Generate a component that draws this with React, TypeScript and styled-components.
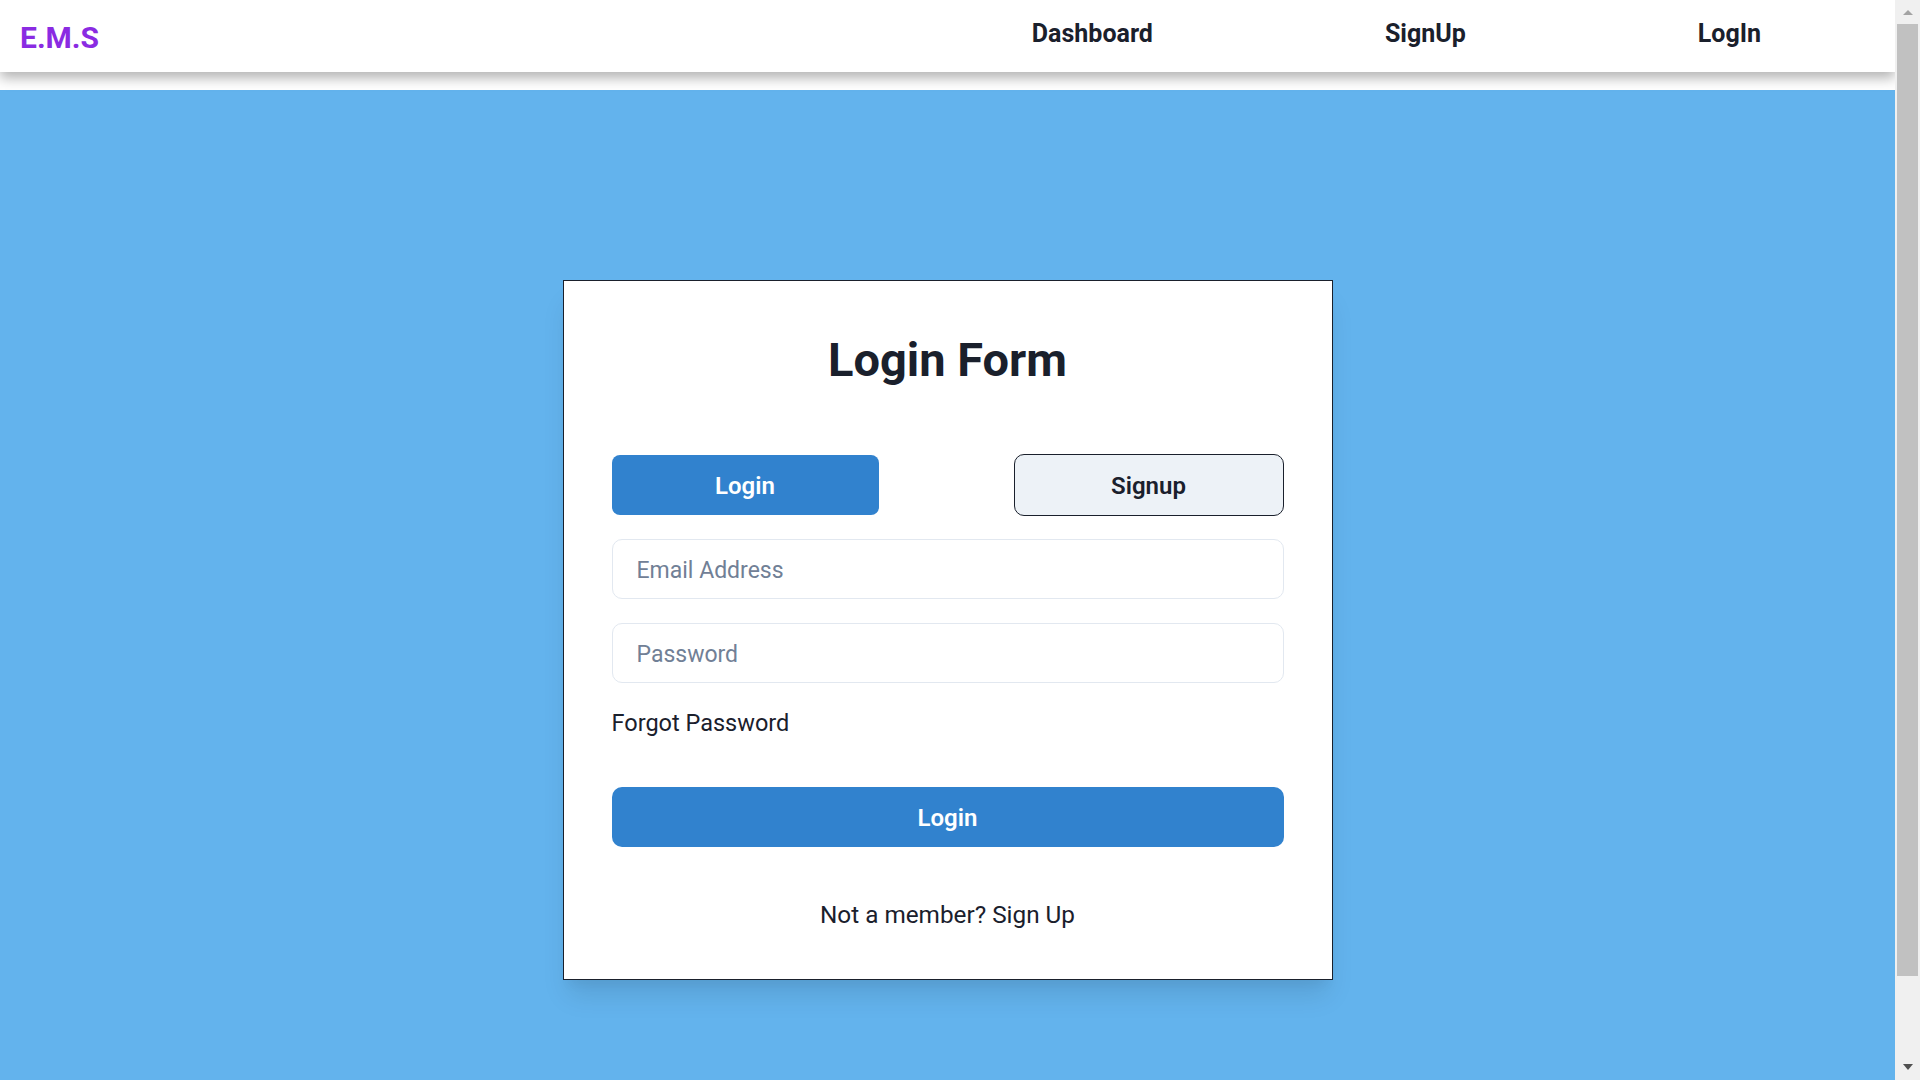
import React from "react";
import styled, { createGlobalStyle } from "styled-components";

const GlobalStyle = createGlobalStyle`
  html, body {
    margin: 0;
    padding: 0;
    overflow: hidden;
  }
  body {
    background: #ffffff;
    font-family: Roboto, "Open Sans", sans-serif;
    color: #1a202c;
  }
  *, *::before, *::after {
    box-sizing: border-box;
  }
`;

const Viewport = styled.div`
  display: flex;
  height: 100vh;
  overflow: hidden;
`;

const Page = styled.div`
  flex: 1;
  min-width: 0;
  overflow-y: auto;
  scrollbar-width: none;
  &::-webkit-scrollbar {
    display: none;
  }
`;

const ScrollBar = styled.div`
  width: 25px;
  flex-shrink: 0;
  display: flex;
  flex-direction: column;
  background: #f0f0f0;
`;

const ScrollArrow = styled.div<{ $dir: "up" | "down" }>`
  height: 22px;
  display: flex;
  justify-content: center;
  padding: ${(p) => (p.$dir === "up" ? "10px" : "6px")} 0 0 1px;
  &::before {
    content: "";
    width: 0;
    height: 0;
    border-left: 5.5px solid transparent;
    border-right: 5.5px solid transparent;
    ${(p) =>
      p.$dir === "up"
        ? "border-bottom: 5px solid #a3a3a3;"
        : "border-top: 6px solid #505050;"}
  }
`;

const ScrollTrack = styled.div`
  flex: 1;
  padding: 2px 2px 0;
`;

const ScrollThumb = styled.div`
  height: 952px;
  background: #c1c1c1;
`;

const NavBar = styled.header`
  position: relative;
  z-index: 1;
  height: 72px;
  display: flex;
  justify-content: space-between;
  align-items: flex-start;
  padding: 19px 134px 0 20px;
  background: #ffffff;
  box-shadow: 0 6px 12px rgba(0, 0, 0, 0.3);
`;

const Logo = styled.a`
  padding-top: 1px;
  font-size: 30px;
  font-weight: 700;
  line-height: 1.2;
  color: #8a2be2;
  text-decoration: none;
`;

const NavLinks = styled.nav`
  display: flex;
  gap: 232px;
`;

const NavLink = styled.a`
  font-size: 25px;
  font-weight: 700;
  line-height: 1.2;
  color: #1a202c;
  text-decoration: none;
`;

const Main = styled.main`
  margin-top: 18px;
  padding: 190px 0 215px;
  display: flex;
  justify-content: center;
  background: #63b3ed;
`;

const Card = styled.section`
  width: 770px;
  display: flex;
  flex-direction: column;
  padding: 52px 48px 46px;
  background: #ffffff;
  border: 1px solid #1a202c;
  box-shadow: 0 20px 25px -5px rgba(0, 0, 0, 0.1), 0 10px 10px -5px rgba(0, 0, 0, 0.04);
`;

const Title = styled.h1`
  margin: 0 0 68px;
  font-size: 47px;
  font-weight: 700;
  line-height: 54px;
  text-align: center;
  color: #1a202c;
`;

const Fields = styled.div`
  display: flex;
  flex-direction: column;
  gap: 24px;
`;

const ToggleRow = styled.div`
  height: 60px;
  display: flex;
  justify-content: space-between;
  align-items: center;
`;

const TabButton = styled.button<{ $active?: boolean }>`
  width: ${(p) => (p.$active ? "267px" : "270px")};
  height: ${(p) => (p.$active ? "60px" : "62px")};
  padding: 2px 0 0;
  border: ${(p) => (p.$active ? "none" : "1px solid #1a202c")};
  border-radius: ${(p) => (p.$active ? "8px" : "10px")};
  background: ${(p) => (p.$active ? "#3182ce" : "#edf2f7")};
  color: ${(p) => (p.$active ? "#ffffff" : "#1a202c")};
  font-family: inherit;
  font-size: 24px;
  font-weight: 600;
  cursor: pointer;
`;

const Input = styled.input`
  width: 100%;
  height: 60px;
  padding: 3px 24px 0;
  border: 1px solid #e2e8f0;
  border-radius: 10px;
  font-family: inherit;
  font-size: 23px;
  color: #1a202c;
  outline: none;
  &::placeholder {
    color: #718096;
  }
`;

const TextLine = styled.p<{ $center?: boolean; $gap: number; $size: number }>`
  margin: ${(p) => p.$gap}px 0 0;
  font-size: ${(p) => p.$size}px;
  line-height: 37.5px;
  color: #1a202c;
  text-align: ${(p) => (p.$center ? "center" : "left")};
`;

const SubmitButton = styled.button`
  width: 100%;
  height: 60px;
  margin-top: 44px;
  padding: 2px 0 0;
  border: none;
  border-radius: 10px;
  background: #3182ce;
  color: #ffffff;
  font-family: inherit;
  font-size: 24px;
  font-weight: 600;
  cursor: pointer;
`;

export default function App() {
  return (
    <>
      <GlobalStyle />
      <Viewport>
        <Page>
          <NavBar>
            <Logo href="#">E.M.S</Logo>
            <NavLinks>
              <NavLink href="#">Dashboard</NavLink>
              <NavLink href="#">SignUp</NavLink>
              <NavLink href="#">LogIn</NavLink>
            </NavLinks>
          </NavBar>
          <Main>
            <Card>
              <Title>Login Form</Title>
              <Fields>
                <ToggleRow>
                  <TabButton $active>Login</TabButton>
                  <TabButton>Signup</TabButton>
                </ToggleRow>
                <Input type="email" placeholder="Email Address" />
                <Input type="password" placeholder="Password" />
              </Fields>
              <TextLine $gap={22} $size={23.5}>
                Forgot Password
              </TextLine>
              <SubmitButton>Login</SubmitButton>
              <TextLine $gap={49} $size={24.3} $center>
                Not a member? Sign Up
              </TextLine>
            </Card>
          </Main>
        </Page>
        <ScrollBar aria-hidden="true">
          <ScrollArrow $dir="up" />
          <ScrollTrack>
            <ScrollThumb />
          </ScrollTrack>
          <ScrollArrow $dir="down" />
        </ScrollBar>
      </Viewport>
    </>
  );
}
